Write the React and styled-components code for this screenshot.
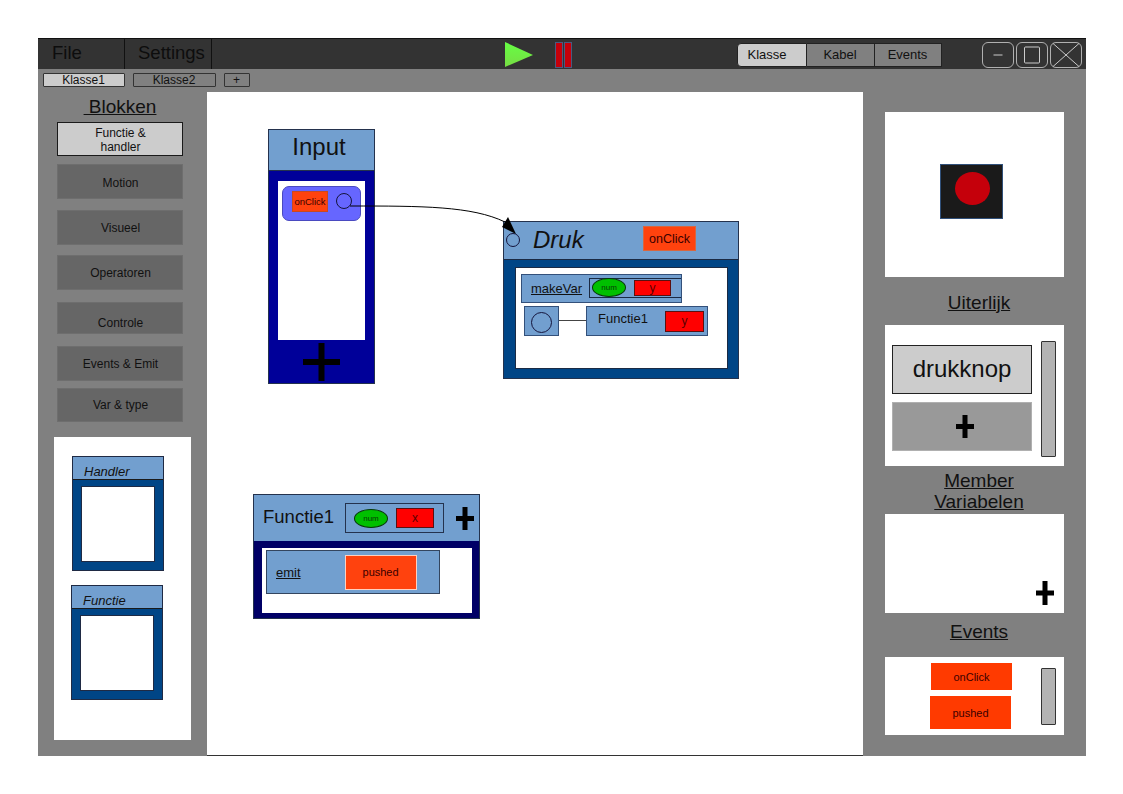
import styled, { createGlobalStyle } from "styled-components";

const GlobalStyle = createGlobalStyle`
  html, body {
    margin: 0;
    padding: 0;
    background: #ffffff;
    font-family: "Liberation Sans", Arial, sans-serif;
    color: #111111;
  }
  * { box-sizing: border-box; }
`;

const blocks = [
  { label: "Motion", top: 8, height: 35, pad: 3 },
  { label: "Visueel", top: 11, height: 35, pad: 1 },
  { label: "Operatoren", top: 10, height: 35, pad: 1 },
  { label: "Controle", top: 12, height: 32, low: true },
  { label: "Events & Emit", top: 12, height: 35, pad: 1 },
  { label: "Var & type", top: 7, height: 34, pad: 0 },
];

const PlusMark = ({ w, h, thick = 5 }) => (
  <svg width={w} height={h} viewBox={`0 0 ${w} ${h}`}>
    <rect x={(w - thick) / 2} y="0" width={thick} height={h} fill="#000" />
    <rect x="0" y={(h - thick) / 2} width={w} height={thick} fill="#000" />
  </svg>
);

const App = () => {
  return (
    <>
      <GlobalStyle />
      <Page>
        <Window>
          <TopBar>
            <MenuTab $pad={14}>File</MenuTab>
            <MenuTab $pad={13}>Settings</MenuTab>
            <PlayIcon width="28" height="25" viewBox="0 0 28 25">
              <defs>
                <linearGradient id="play" x1="0" y1="0" x2="0" y2="1">
                  <stop offset="0" stopColor="#66ff44" />
                  <stop offset="1" stopColor="#77dd44" />
                </linearGradient>
              </defs>
              <polygon points="0,0 28,13 0,25" fill="url(#play)" />
            </PlayIcon>
            <PauseIcon width="17" height="26" viewBox="0 0 17 26">
              <rect x="0.5" y="0.5" width="7" height="25" fill="#c5000b" stroke="#4a5a80" />
              <rect x="9.5" y="0.5" width="7" height="25" fill="#c5000b" stroke="#4a5a80" />
            </PauseIcon>
            <Segments>
              <Segment $active $width={70}>Klasse</Segment>
              <Segment $width={68}>Kabel</Segment>
              <Segment $width={67}>Events</Segment>
            </Segments>
            <WindowButtons>
              <WindowButton>
                <svg width="12" height="2" viewBox="0 0 12 2">
                  <rect y="0.5" width="9" height="1" x="1.5" fill="#cccccc" />
                </svg>
              </WindowButton>
              <WindowButton>
                <svg width="20" height="20" viewBox="0 0 20 20">
                  <rect x="2.5" y="2" width="15" height="16" rx="1" fill="none" stroke="#cccccc" />
                </svg>
              </WindowButton>
              <WindowButton>
                <svg width="31" height="26" viewBox="0 0 31 26">
                  <path d="M2 1 L29 25 M29 1 L2 25" stroke="#cccccc" fill="none" />
                </svg>
              </WindowButton>
            </WindowButtons>
          </TopBar>

          <TabRow>
            <ClassTab $active $width={82}>Klasse1</ClassTab>
            <ClassTab $width={83}>Klasse2</ClassTab>
            <ClassTab $width={26}>+</ClassTab>
          </TabRow>

          <Body>
            <LeftPanel>
              <BlocksTitle> Blokken</BlocksTitle>
              <BlockButton $active $height={34} $pad={1}>
                Functie &amp;
                <br />
                handler
              </BlockButton>
              {blocks.map((block) => (
                <BlockButton
                  key={block.label}
                  $top={block.top}
                  $height={block.height}
                  $low={block.low}
                  $pad={block.pad}
                >
                  {block.label}
                </BlockButton>
              ))}
              <Palette>
                <PaletteCard $left={18}>
                  <PaletteHead>Handler</PaletteHead>
                  <PaletteBody>
                    <PaletteInner />
                  </PaletteBody>
                </PaletteCard>
                <PaletteCard $left={17} $top={14}>
                  <PaletteHead>Functie</PaletteHead>
                  <PaletteBody>
                    <PaletteInner />
                  </PaletteBody>
                </PaletteCard>
              </Palette>
            </LeftPanel>

            <Canvas>
              <Node $x={61} $y={37} $w={107} $h={255} $bg="#000099">
                <InputHead>Input</InputHead>
                <InputInner>
                  <HandlerRow>
                    <TinyEvent>onClick</TinyEvent>
                    <Port $size={16} />
                  </HandlerRow>
                </InputInner>
                <InputFoot>
                  <PlusMark w={37} h={38} thick={6} />
                </InputFoot>
              </Node>

              <Node $x={296} $y={129} $w={236} $h={158} $bg="#004586">
                <DrukHead>
                  <Port $size={14} />
                  <DrukTitle>Druk</DrukTitle>
                  <HeadEvent>onClick</HeadEvent>
                </DrukHead>
                <DrukInner>
                  <MakeVarRow>
                    <LinkLabel>makeVar</LinkLabel>
                    <ParamBox>
                      <NumOval>num</NumOval>
                      <VarBox $w={37} $h={16}>y</VarBox>
                    </ParamBox>
                  </MakeVarRow>
                  <CallRow>
                    <PortBox>
                      <Port $size={21} />
                    </PortBox>
                    <CallLine />
                    <CallBox>
                      <CallName>Functie1</CallName>
                      <VarBox $w={39} $h={21}>y</VarBox>
                    </CallBox>
                  </CallRow>
                </DrukInner>
              </Node>

              <Node $x={46} $y={402} $w={227} $h={125} $bg="#000066">
                <FunctieHead>
                  <FunctieName>Functie1</FunctieName>
                  <FunctieParams>
                    <NumOval>num</NumOval>
                    <VarBox $w={38} $h={20}>x</VarBox>
                  </FunctieParams>
                  <PlusSlot>
                    <PlusMark w={18} h={23} thick={5} />
                  </PlusSlot>
                </FunctieHead>
                <FunctieInner>
                  <EmitRow>
                    <LinkLabel>emit</LinkLabel>
                    <PushedBox>pushed</PushedBox>
                  </EmitRow>
                </FunctieInner>
              </Node>

              <Wire width="656" height="664" viewBox="0 0 656 664">
                <path
                  d="M143 114 C 215 114 265 114 298 130"
                  fill="none"
                  stroke="#000"
                  strokeWidth="1"
                />
                <polygon points="295,135 301,125 309,142" fill="#000" />
              </Wire>
            </Canvas>

            <RightPanel>
              <Preview>
                <PreviewBlock>
                  <PreviewDot />
                </PreviewBlock>
              </Preview>
              <SideTitle $height={48} $pt={2}>Uiterlijk</SideTitle>
              <LooksPanel>
                <LooksList>
                  <LookItem>drukknop</LookItem>
                  <LookAdd>
                    <PlusMark w={18} h={23} thick={5} />
                  </LookAdd>
                </LooksList>
                <Scroll $height={116} />
              </LooksPanel>
              <SideTitle $height={48} $pt={2}>
                Member
                <br />
                Variabelen
              </SideTitle>
              <MemberPanel>
                <PlusMark w={18} h={24} thick={5} />
              </MemberPanel>
              <SideTitle $height={44} $pb={8}>Events</SideTitle>
              <EventsPanel>
                <EventList>
                  <EventItem $height={27} $left={1}>onClick</EventItem>
                  <EventItem $height={33}>pushed</EventItem>
                </EventList>
                <Scroll $height={57} $top={5} />
              </EventsPanel>
            </RightPanel>
          </Body>
        </Window>
      </Page>
    </>
  );
};

const Page = styled.div`
  width: 1123px;
  height: 794px;
  padding: 38px 0 0 38px;
  overflow: hidden;
`;

const Window = styled.div`
  width: 1048px;
  height: 718px;
  display: flex;
  flex-direction: column;
  background: #808080;
`;

const TopBar = styled.div`
  height: 31px;
  display: flex;
  align-items: flex-start;
  background: #333333;
  border-top: 1px solid #111111;
`;

const MenuTab = styled.div`
  width: 87px;
  height: 30px;
  padding-left: ${({ $pad }) => $pad}px;
  border-right: 1px solid #111111;
  font-size: 18.5px;
  line-height: 28px;
  color: #0d0d0d;
`;

const PlayIcon = styled.svg`
  margin: 3px 0 0 293px;
  flex-shrink: 0;
`;

const PauseIcon = styled.svg`
  margin: 3px 0 0 22px;
  flex-shrink: 0;
`;

const Segments = styled.div`
  display: flex;
  margin: 4px 0 0 165px;
  height: 24px;
`;

const Segment = styled.div`
  width: ${({ $width }) => $width}px;
  display: flex;
  align-items: center;
  justify-content: center;
  padding: 0 ${({ $active }) => ($active ? "10px" : "1px")} 2px 0;
  font-size: 13px;
  color: #111111;
  background: ${({ $active }) => ($active ? "#cccccc" : "#808080")};
  border: 1px solid #222222;
  border-left-width: ${({ $active }) => ($active ? "1px" : "0")};
  border-radius: ${({ $active }) => ($active ? "4px 0 0 4px" : "0")};
`;

const WindowButtons = styled.div`
  display: flex;
  gap: 2px;
  margin: 3px 0 0 40px;
`;

const WindowButton = styled.div`
  width: 32px;
  height: 26px;
  display: flex;
  align-items: center;
  justify-content: center;
  border: 1px solid #b0b0b0;
  border-radius: 6px;
`;

const TabRow = styled.div`
  height: 23px;
  display: flex;
  gap: 8px;
  padding: 4px 0 0 5px;
  background: #808080;
`;

const ClassTab = styled.div`
  width: ${({ $width }) => $width}px;
  height: 14px;
  display: flex;
  align-items: center;
  justify-content: center;
  padding-right: 1px;
  font-size: 12px;
  color: #111111;
  background: ${({ $active }) => ($active ? "#cccccc" : "#808080")};
  border: 1px solid #333333;
  border-radius: 1px;
`;

const Body = styled.div`
  flex: 1;
  display: flex;
  min-height: 0;
`;

const LeftPanel = styled.div`
  width: 169px;
  display: flex;
  flex-direction: column;
  padding-left: 19px;
`;

const BlocksTitle = styled.div`
  width: 126px;
  height: 30px;
  padding-top: 4px;
  text-align: center;
  font-size: 19px;
  line-height: 21px;
  white-space: pre;
  text-decoration: underline;
`;

const BlockButton = styled.div`
  width: 126px;
  height: ${({ $height }) => $height}px;
  margin-top: ${({ $top }) => $top || 0}px;
  padding-top: ${({ $low, $pad }) => ($low ? 13 : $pad)}px;
  padding-left: 1px;
  display: flex;
  align-items: ${({ $low }) => ($low ? "flex-start" : "center")};
  justify-content: center;
  text-align: center;
  font-size: 12px;
  line-height: 14px;
  color: #111111;
  background: ${({ $active }) => ($active ? "#cccccc" : "#666666")};
  border: ${({ $active }) => ($active ? "1px solid #1a1a1a" : "1px solid #6e6e6e")};
`;

const Palette = styled.div`
  width: 137px;
  height: 303px;
  margin: 15px 0 0 -3px;
  padding-top: 19px;
  background: #ffffff;
`;

const PaletteCard = styled.div`
  width: 92px;
  height: 115px;
  margin: ${({ $top }) => $top || 0}px 0 0 ${({ $left }) => $left}px;
  display: flex;
  flex-direction: column;
  border: 1px solid #1f2a44;
`;

const PaletteHead = styled.div`
  height: 23px;
  padding: 7px 0 0 11px;
  background: #729fcf;
  border-bottom: 1px solid #1a1a1a;
  font-size: 13px;
  line-height: 15px;
  font-style: italic;
`;

const PaletteBody = styled.div`
  flex: 1;
  padding: 6px 8px 8px;
  background: #004586;
`;

const PaletteInner = styled.div`
  height: 100%;
  background: #ffffff;
  border: 1px solid #1f2a44;
`;

const Canvas = styled.div`
  position: relative;
  width: 656px;
  height: 664px;
  background: #ffffff;
  border-bottom: 1px solid #333333;
`;

const Node = styled.div`
  position: absolute;
  left: ${({ $x }) => $x}px;
  top: ${({ $y }) => $y}px;
  width: ${({ $w }) => $w}px;
  height: ${({ $h }) => $h}px;
  display: flex;
  flex-direction: column;
  background: ${({ $bg }) => $bg};
  border: 1px solid #24324d;
`;

const Wire = styled.svg`
  position: absolute;
  left: 0;
  top: 0;
  pointer-events: none;
`;

const InputHead = styled.div`
  height: 41px;
  display: flex;
  align-items: center;
  justify-content: center;
  padding: 0 5px 7px 0;
  background: #729fcf;
  border-bottom: 1px solid #24324d;
  font-size: 24px;
`;

const InputInner = styled.div`
  height: 159px;
  margin: 10px 9px 0;
  padding: 5px 4px;
  background: #ffffff;
`;

const HandlerRow = styled.div`
  height: 35px;
  display: flex;
  align-items: center;
  gap: 8px;
  padding: 0 0 5px 9px;
  background: #6666ff;
  border: 1px solid #4a4ac0;
  border-radius: 7px;
`;

const TinyEvent = styled.div`
  width: 36px;
  height: 21px;
  display: flex;
  align-items: center;
  justify-content: center;
  background: #ff420e;
  border: 1px solid #c84a20;
  font-size: 9.5px;
  color: #3a0000;
`;

const Port = styled.div`
  width: ${({ $size }) => $size}px;
  height: ${({ $size }) => $size}px;
  flex-shrink: 0;
  border: 1px solid #14143c;
  border-radius: 50%;
`;

const InputFoot = styled.div`
  flex: 1;
  display: flex;
  align-items: center;
  justify-content: center;
`;

const DrukHead = styled.div`
  height: 38px;
  display: flex;
  align-items: center;
  padding: 0 0 2px 2px;
  background: #729fcf;
  border-bottom: 1px solid #1a2a44;
`;

const DrukTitle = styled.div`
  width: 110px;
  margin-left: 13px;
  font-size: 24px;
  font-style: italic;
`;

const HeadEvent = styled.div`
  width: 53px;
  height: 25px;
  margin-bottom: 2px;
  display: flex;
  align-items: center;
  justify-content: center;
  background: #ff420e;
  border: 1px solid #d8663f;
  font-size: 12.5px;
  color: #3a0000;
`;

const DrukInner = styled.div`
  width: 213px;
  height: 102px;
  margin: 7px 0 0 11px;
  padding: 6px 0 0 5px;
  display: flex;
  flex-direction: column;
  gap: 3px;
  background: #ffffff;
  border: 1px solid #1a2a44;
`;

const MakeVarRow = styled.div`
  width: 161px;
  height: 29px;
  display: flex;
  align-items: center;
  gap: 7px;
  padding-left: 9px;
  background: #729fcf;
  border: 1px solid #33507a;
`;

const LinkLabel = styled.span`
  font-size: 13px;
  text-decoration: underline;
`;

const ParamBox = styled.div`
  flex: 1;
  height: 20px;
  display: flex;
  align-items: center;
  gap: 8px;
  padding-left: 2px;
  margin-bottom: 2px;
  border: 1px solid #1a2a44;
  border-right: 0;
`;

const NumOval = styled.div`
  width: 34px;
  height: 19px;
  flex-shrink: 0;
  display: flex;
  align-items: center;
  justify-content: center;
  background: #00c000;
  border: 1px solid #063a06;
  border-radius: 50%;
  font-size: 8px;
  color: #063a06;
`;

const VarBox = styled.div`
  width: ${({ $w }) => $w}px;
  height: ${({ $h }) => $h}px;
  display: flex;
  align-items: center;
  justify-content: center;
  background: #ff0000;
  border: 1px solid #5a1010;
  font-size: 12px;
  color: #5a0000;
`;

const CallRow = styled.div`
  display: flex;
  align-items: center;
  margin-left: 3px;
`;

const PortBox = styled.div`
  width: 35px;
  height: 30px;
  display: flex;
  align-items: center;
  justify-content: center;
  padding-top: 3px;
  background: #729fcf;
  border: 1px solid #33507a;
`;

const CallLine = styled.div`
  width: 27px;
  height: 1px;
  margin-bottom: 1px;
  background: #444444;
`;

const CallBox = styled.div`
  width: 122px;
  height: 30px;
  display: flex;
  align-items: center;
  justify-content: space-between;
  padding: 0 3px 0 11px;
  background: #729fcf;
  border: 1px solid #33507a;
`;

const CallName = styled.span`
  padding-bottom: 5px;
  font-size: 13px;
`;

const FunctieHead = styled.div`
  height: 46px;
  display: flex;
  align-items: center;
  background: #729fcf;
`;

const FunctieName = styled.div`
  width: 91px;
  padding: 0 0 2px 9px;
  font-size: 18.5px;
`;

const FunctieParams = styled.div`
  width: 99px;
  height: 30px;
  display: flex;
  align-items: center;
  gap: 8px;
  padding-left: 8px;
  border: 1px solid #24324d;
`;

const PlusSlot = styled.div`
  display: flex;
  margin-left: 12px;
`;

const FunctieInner = styled.div`
  width: 210px;
  height: 65px;
  margin: 7px 0 0 8px;
  padding: 2px 0 0 4px;
  background: #ffffff;
`;

const EmitRow = styled.div`
  width: 174px;
  height: 44px;
  display: flex;
  align-items: center;
  gap: 44px;
  padding-left: 9px;
  background: #729fcf;
  border: 1px solid #33455f;
`;

const PushedBox = styled.div`
  width: 72px;
  height: 35px;
  display: flex;
  align-items: center;
  justify-content: center;
  background: #ff420e;
  border: 1px solid #ffd0c0;
  font-size: 11px;
  color: #3a0000;
`;

const RightPanel = styled.div`
  flex: 1;
  display: flex;
  flex-direction: column;
  padding: 20px 0 0 22px;
`;

const Preview = styled.div`
  width: 179px;
  height: 165px;
  padding: 0 6px 7px 0;
  display: flex;
  align-items: center;
  justify-content: center;
  background: #ffffff;
`;

const PreviewBlock = styled.div`
  width: 63px;
  height: 55px;
  padding: 0 0 5px 1px;
  display: flex;
  align-items: center;
  justify-content: center;
  background: #1a1a1a;
  border: 1px solid #30507a;
`;

const PreviewDot = styled.div`
  width: 35px;
  height: 33px;
  border-radius: 50%;
  background: #c5000b;
`;

const SideTitle = styled.div`
  width: 179px;
  height: ${({ $height }) => $height}px;
  padding: ${({ $pt }) => $pt || 0}px 0 ${({ $pb }) => $pb || 0}px 9px;
  display: flex;
  align-items: center;
  justify-content: center;
  text-align: center;
  font-size: 19px;
  line-height: 21px;
  text-decoration: underline;
`;

const LooksPanel = styled.div`
  width: 179px;
  height: 141px;
  display: flex;
  justify-content: space-between;
  padding: 16px 8px 0 7px;
  background: #ffffff;
`;

const LooksList = styled.div`
  width: 140px;
  display: flex;
  flex-direction: column;
  gap: 8px;
  padding-top: 4px;
`;

const LookItem = styled.div`
  height: 49px;
  display: flex;
  align-items: center;
  justify-content: center;
  padding-bottom: 2px;
  background: #cccccc;
  border: 1px solid #222222;
  font-size: 24px;
`;

const LookAdd = styled.div`
  height: 49px;
  display: flex;
  align-items: center;
  justify-content: center;
  padding-left: 6px;
  background: #999999;
  border: 1px solid #b0b0b0;
`;

const Scroll = styled.div`
  width: 15px;
  height: ${({ $height }) => $height}px;
  margin-top: ${({ $top }) => $top || 0}px;
  background: #b3b3b3;
  border: 1px solid #333333;
  border-radius: 1px;
`;

const MemberPanel = styled.div`
  width: 179px;
  height: 99px;
  display: flex;
  align-items: flex-end;
  justify-content: flex-end;
  padding: 0 10px 8px 0;
  background: #ffffff;
`;

const EventsPanel = styled.div`
  width: 179px;
  height: 78px;
  display: flex;
  justify-content: space-between;
  padding: 6px 8px 0 45px;
  background: #ffffff;
`;

const EventList = styled.div`
  display: flex;
  flex-direction: column;
  gap: 6px;
`;

const EventItem = styled.div`
  width: 81px;
  height: ${({ $height }) => $height}px;
  margin-left: ${({ $left }) => $left || 0}px;
  display: flex;
  align-items: center;
  justify-content: center;
  background: #ff3a00;
  font-size: 11px;
  color: #3a0000;
`;

export default App;
